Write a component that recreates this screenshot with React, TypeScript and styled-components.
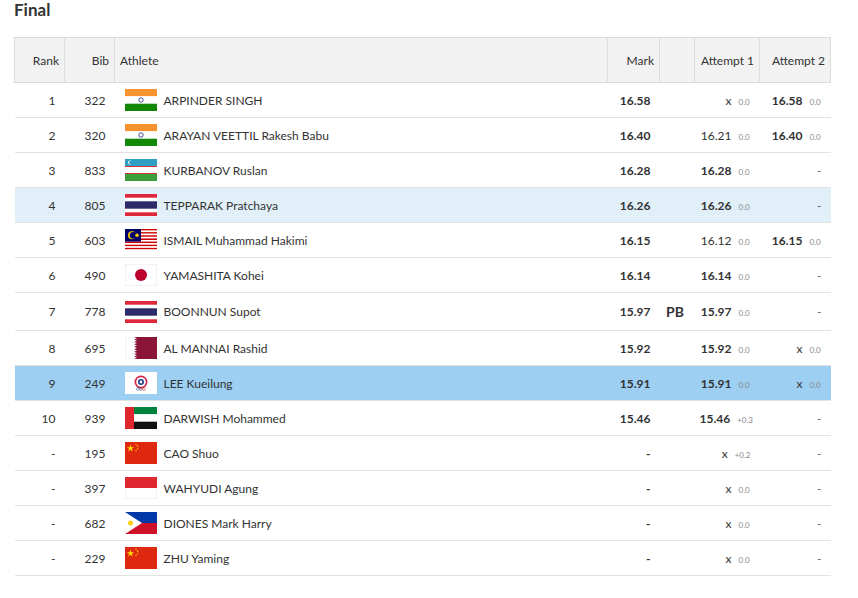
import React from "react";
import styled, { createGlobalStyle } from "styled-components";

const Global = createGlobalStyle`
body { margin: 0; background: #fff; font-family: Lato, "Open Sans", sans-serif; color: #333; }
`;

type Att = { v: string; w?: string; bold?: boolean } | null;
type Row = { rank: string; bib: string; flag: string; name: string; mark: string; pb?: boolean; a1: Att; a2: Att; hl?: "light" | "strong" };

const rows: Row[] = [
  { rank: "1", bib: "322", flag: "IND", name: "ARPINDER SINGH", mark: "16.58", a1: { v: "x", w: "0.0" }, a2: { v: "16.58", w: "0.0", bold: true } },
  { rank: "2", bib: "320", flag: "IND", name: "ARAYAN VEETTIL Rakesh Babu", mark: "16.40", a1: { v: "16.21", w: "0.0" }, a2: { v: "16.40", w: "0.0", bold: true } },
  { rank: "3", bib: "833", flag: "UZB", name: "KURBANOV Ruslan", mark: "16.28", a1: { v: "16.28", w: "0.0", bold: true }, a2: null },
  { rank: "4", bib: "805", flag: "THA", name: "TEPPARAK Pratchaya", mark: "16.26", a1: { v: "16.26", w: "0.0", bold: true }, a2: null, hl: "light" },
  { rank: "5", bib: "603", flag: "MAS", name: "ISMAIL Muhammad Hakimi", mark: "16.15", a1: { v: "16.12", w: "0.0" }, a2: { v: "16.15", w: "0.0", bold: true } },
  { rank: "6", bib: "490", flag: "JPN", name: "YAMASHITA Kohei", mark: "16.14", a1: { v: "16.14", w: "0.0", bold: true }, a2: null },
  { rank: "7", bib: "778", flag: "THA", name: "BOONNUN Supot", mark: "15.97", pb: true, a1: { v: "15.97", w: "0.0", bold: true }, a2: null },
  { rank: "8", bib: "695", flag: "QAT", name: "AL MANNAI Rashid", mark: "15.92", a1: { v: "15.92", w: "0.0", bold: true }, a2: { v: "x", w: "0.0" } },
  { rank: "9", bib: "249", flag: "TPE", name: "LEE Kueilung", mark: "15.91", a1: { v: "15.91", w: "0.0", bold: true }, a2: { v: "x", w: "0.0" }, hl: "strong" },
  { rank: "10", bib: "939", flag: "UAE", name: "DARWISH Mohammed", mark: "15.46", a1: { v: "15.46", w: "+0.3", bold: true }, a2: null },
  { rank: "-", bib: "195", flag: "CHN", name: "CAO Shuo", mark: "-", a1: { v: "x", w: "+0.2" }, a2: null },
  { rank: "-", bib: "397", flag: "INA", name: "WAHYUDI Agung", mark: "-", a1: { v: "x", w: "0.0" }, a2: null },
  { rank: "-", bib: "682", flag: "PHI", name: "DIONES Mark Harry", mark: "-", a1: { v: "x", w: "0.0" }, a2: null },
  { rank: "-", bib: "229", flag: "CHN", name: "ZHU Yaming", mark: "-", a1: { v: "x", w: "0.0" }, a2: null },
];

const colWidths = [50, 50, 0, 52, 35, 65, 71];

function FlagShapes({ code }: { code: string }) {
  switch (code) {
    case "IND":
      return (
        <>
          <rect width="32" height="7.3" fill="#f7932f" />
          <rect y="7.3" width="32" height="7.4" fill="#fff" />
          <rect y="14.7" width="32" height="7.3" fill="#138808" />
          <circle cx="16" cy="11" r="2.2" fill="none" stroke="#1a237e" strokeWidth="0.8" />
        </>
      );
    case "UZB":
      return (
        <>
          <rect width="32" height="7" fill="#2f9fc4" />
          <rect y="7" width="32" height="8" fill="#fff" />
          <rect y="7" width="32" height="0.8" fill="#c00" />
          <rect y="14.2" width="32" height="0.8" fill="#c00" />
          <rect y="15" width="32" height="7" fill="#3a9c3a" />
          <circle cx="5" cy="3.5" r="2" fill="#fff" />
          <circle cx="5.8" cy="3.5" r="1.8" fill="#2f9fc4" />
        </>
      );
    case "THA":
      return (
        <>
          <rect width="32" height="22" fill="#e0263a" />
          <rect y="3.7" width="32" height="14.6" fill="#fff" />
          <rect y="7.3" width="32" height="7.4" fill="#2d2a6b" />
        </>
      );
    case "MAS":
      return (
        <>
          {Array.from({ length: 14 }).map((_, i) => (
            <rect key={i} y={i * (22 / 14)} width="32" height={22 / 14} fill={i % 2 ? "#fff" : "#cc0000"} />
          ))}
          <rect width="16" height="12.6" fill="#010066" />
          <circle cx="7" cy="6.3" r="4" fill="#fc0" />
          <circle cx="8.2" cy="6.3" r="3.4" fill="#010066" />
          <circle cx="12" cy="6.3" r="1.8" fill="#fc0" />
        </>
      );
    case "JPN":
      return (
        <>
          <rect width="32" height="22" fill="#fff" stroke="#e5e5e5" />
          <circle cx="16" cy="11" r="6" fill="#bc002d" />
        </>
      );
    case "QAT":
      return (
        <>
          <rect width="32" height="22" fill="#fff" stroke="#e5e5e5" />
          <path d="M9 0H32V22H9L12 20.8 9 19.6 12 18.3 9 17.1 12 15.9 9 14.7 12 13.4 9 12.2 12 11 9 9.8 12 8.6 9 7.3 12 6.1 9 4.9 12 3.7 9 2.4 12 1.2Z" fill="#8a1538" />
        </>
      );
    case "TPE":
      return (
        <>
          <rect width="32" height="22" fill="#fff" />
          <circle cx="16" cy="10" r="6.5" fill="#d5264a" />
          <circle cx="16" cy="10" r="4.8" fill="#fff" />
          <circle cx="16" cy="10" r="3" fill="#1b3d8f" />
          <circle cx="16" cy="10" r="1.4" fill="#fff" />
          <circle cx="13" cy="17" r="1.4" fill="none" stroke="#1b3d8f" strokeWidth="0.5" />
          <circle cx="16" cy="17" r="1.4" fill="none" stroke="#333" strokeWidth="0.5" />
          <circle cx="19" cy="17" r="1.4" fill="none" stroke="#d5264a" strokeWidth="0.5" />
        </>
      );
    case "UAE":
      return (
        <>
          <rect width="32" height="7.3" fill="#00843d" />
          <rect y="7.3" width="32" height="7.4" fill="#fff" />
          <rect y="14.7" width="32" height="7.3" fill="#111" />
          <rect width="9" height="22" fill="#e0262e" />
        </>
      );
    case "CHN":
      return (
        <>
          <rect width="32" height="22" fill="#de2910" />
          <polygon points="5.5,2.5 6.4,5.2 9.2,5.2 6.9,6.8 7.8,9.5 5.5,7.8 3.2,9.5 4.1,6.8 1.8,5.2 4.6,5.2" fill="#ffde00" />
          <circle cx="11" cy="2.4" r="0.7" fill="#ffde00" />
          <circle cx="12.6" cy="4.2" r="0.7" fill="#ffde00" />
          <circle cx="12.6" cy="6.6" r="0.7" fill="#ffde00" />
          <circle cx="11" cy="8.4" r="0.7" fill="#ffde00" />
        </>
      );
    case "INA":
      return (
        <>
          <rect width="32" height="22" fill="#fff" stroke="#e5e5e5" />
          <rect width="32" height="11" fill="#e0262e" />
        </>
      );
    case "PHI":
      return (
        <>
          <rect width="32" height="11" fill="#0038a8" />
          <rect y="11" width="32" height="11" fill="#ce1126" />
          <polygon points="0,0 17,11 0,22" fill="#fff" />
          <circle cx="5.5" cy="11" r="2.5" fill="#fcd116" />
        </>
      );
    default:
      return null;
  }
}

function Attempt({ a }: { a: Att }) {
  if (!a) return <Dash>-</Dash>;
  return (
    <>
      <AttVal $bold={a.bold}>{a.v}</AttVal>
      <Wind>{a.w}</Wind>
    </>
  );
}

export default function App() {
  return (
    <Page>
      <Global />
      <Title>Final</Title>
      <Table>
        <colgroup>
          {colWidths.map((w, i) => (
            <Col key={i} $w={w} />
          ))}
        </colgroup>
        <thead>
          <tr>
            <Th>Rank</Th>
            <Th>Bib</Th>
            <Th $left>Athlete</Th>
            <Th>Mark</Th>
            <Th></Th>
            <Th>Attempt 1</Th>
            <Th>Attempt 2</Th>
          </tr>
        </thead>
        <tbody>
          {rows.map((r, i) => (
            <Tr key={i} $hl={r.hl} $tall={r.pb}>
              <Td>{r.rank}</Td>
              <Td>{r.bib}</Td>
              <Td $left>
                <Athlete>
                  <FlagSvg viewBox="0 0 32 22">
                    <FlagShapes code={r.flag} />
                  </FlagSvg>
                  <span>{r.name}</span>
                </Athlete>
              </Td>
              <Td $bold>{r.mark}</Td>
              <Td $center $bold $big>{r.pb ? "PB" : ""}</Td>
              <Td><Attempt a={r.a1} /></Td>
              <Td><Attempt a={r.a2} /></Td>
            </Tr>
          ))}
        </tbody>
      </Table>
    </Page>
  );
}

const Page = styled.div`
  padding: 0 27px 0 14px;
`;

const Title = styled.h2`
  margin: 0;
  height: 37px;
  line-height: 20px;
  font-size: 17px;
  font-weight: 700;
  color: #333;
`;

const Table = styled.table`
  width: 817px;
  border-collapse: collapse;
  table-layout: fixed;
  font-size: 12px;
`;

const Col = styled.col<{ $w: number }>`
  width: ${(p) => (p.$w ? `${p.$w}px` : "auto")};
`;

const Th = styled.th<{ $left?: boolean }>`
  height: 44px;
  padding: 0 5px;
  background: #f2f2f2;
  border: 1px solid #dcdcdc;
  font-weight: 400;
  font-size: 12px;
  color: #333;
  text-align: ${(p) => (p.$left ? "left" : "right")};
`;

const Tr = styled.tr<{ $hl?: "light" | "strong"; $tall?: boolean }>`
  height: ${(p) => (p.$tall ? 38 : 35)}px;
  border-bottom: 1px solid #e3e3e3;
  background: ${(p) => (p.$hl === "strong" ? "#9dcff3" : p.$hl === "light" ? "#e1eff9" : "#fff")};
`;

const Td = styled.td<{ $left?: boolean; $center?: boolean; $bold?: boolean; $big?: boolean }>`
  padding: 0 9px 0 5px;
  white-space: nowrap;
  color: #333;
  font-weight: ${(p) => (p.$bold ? 700 : 400)};
  font-size: ${(p) => (p.$big ? 14 : 12)}px;
  text-align: ${(p) => (p.$left ? "left" : p.$center ? "center" : "right")};
`;

const Athlete = styled.div`
  display: flex;
  align-items: center;
  gap: 7px;
  padding-left: 5px;
`;

const FlagSvg = styled.svg`
  width: 32px;
  height: 22px;
  display: block;
  flex-shrink: 0;
`;

const AttVal = styled.span<{ $bold?: boolean }>`
  font-size: 12px;
  font-weight: ${(p) => (p.$bold ? 700 : 400)};
`;

const Wind = styled.span`
  display: inline-block;
  margin-left: 7px;
  font-size: 8px;
  color: #888;
  min-width: 12px;
  text-align: left;
`;

const Dash = styled.span`
  color: #666;
`;
